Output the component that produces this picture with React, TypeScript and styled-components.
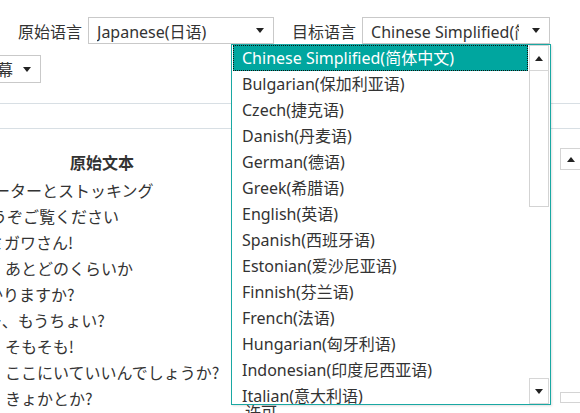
import styled, { createGlobalStyle } from "styled-components";

const GlobalStyle = createGlobalStyle`
  html, body {
    margin: 0;
    padding: 0;
    background: #ffffff;
    overflow: hidden;
  }
  body {
    font-family: "Noto Sans", "Noto Sans CJK SC", sans-serif;
    color: #333333;
  }
`;

const Viewport = styled.div`
  position: relative;
  width: 580px;
  height: 413px;
  overflow: hidden;
`;

// the page is scrolled sideways, so its left edge is out of view
const Page = styled.div`
  width: 640px;
  margin-left: -60px;
`;

const Toolbar = styled.div`
  display: flex;
  align-items: center;
  gap: 6px;
  padding: 17px 0 0 78px;
  height: 27px;
`;

const Label = styled.span<{ $gap?: number }>`
  font-size: 16px;
  font-family: "Noto Sans CJK SC", sans-serif;
  color: #333;
  margin-left: ${(p) => p.$gap ?? 0}px;
`;

const Select = styled.div<{ $width: number; $height?: number }>`
  box-sizing: border-box;
  width: ${(p) => p.$width}px;
  height: ${(p) => p.$height ?? 27}px;
  border: 1px solid #c9c9c9;
  background: #fff;
  display: flex;
  align-items: center;
  padding: 0 9px 0 8px;
  font-size: 16px;
  color: #333;
  white-space: nowrap;
  flex: none;
`;

const SelectText = styled.span<{ $right?: boolean }>`
  flex: 1;
  min-width: 0;
  overflow: hidden;
  text-align: ${(p) => (p.$right ? "right" : "left")};
  font-family: "Noto Sans", "Noto Sans CJK SC", sans-serif;
`;

const Caret = styled.span<{ $up?: boolean; $gap?: number }>`
  width: 0;
  height: 0;
  border-left: 4px solid transparent;
  border-right: 4px solid transparent;
  ${(p) =>
    p.$up
      ? "border-bottom: 5px solid #222;"
      : "border-top: 5px solid #222;"}
  flex: none;
  margin-left: ${(p) => p.$gap ?? 0}px;
`;

const SecondRow = styled.div`
  padding-top: 11px;
  height: 28px;
`;

const Rule = styled.div<{ $top: number }>`
  margin-top: ${(p) => p.$top}px;
  border-top: 1px solid #d8dfe4;
`;

const Main = styled.div`
  display: flex;
  height: 284px;
`;

const Pane = styled.div<{ $width?: number; $top: number }>`
  ${(p) => (p.$width ? `width: ${p.$width}px;` : "flex: 1;")}
  padding-top: ${(p) => p.$top}px;
  overflow: hidden;
`;

const PaneTitle = styled.div<{ $pad: number }>`
  padding-left: ${(p) => p.$pad}px;
  text-align: center;
  font-weight: 700;
  font-size: 16px;
  line-height: 26px;
  font-family: "Noto Sans CJK SC", sans-serif;
  color: #333;
  margin-bottom: 2px;
`;

const Line = styled.div<{ $pad: number }>`
  padding-left: ${(p) => p.$pad}px;
  font-size: 16px;
  line-height: 26px;
  white-space: nowrap;
  font-family: "Noto Sans CJK JP", sans-serif;
  color: #333;
`;

const SideBar = styled.div`
  width: 20px;
  display: flex;
  flex-direction: column;
  justify-content: space-between;
  padding: 19px 0 10px;
`;

const SideButton = styled.div<{ $height: number }>`
  box-sizing: border-box;
  height: ${(p) => p.$height}px;
  width: 22px;
  border: 1px solid #d4d4d4;
  display: flex;
  align-items: center;
  justify-content: center;
`;

const Dropdown = styled.div`
  position: absolute;
  left: 231px;
  top: 44px;
  width: 320px;
  height: 361px;
  box-sizing: border-box;
  border: 1px solid #19a8a3;
  background: #fff;
  display: flex;
  box-shadow: 1px 1px 2px rgba(0, 0, 0, 0.12);
`;

const List = styled.div`
  flex: 1;
  overflow: hidden;
`;

const Option = styled.div<{ $selected?: boolean }>`
  height: 26px;
  line-height: 24px;
  box-sizing: border-box;
  padding-left: 8px;
  font-size: 16px;
  white-space: nowrap;
  font-family: "Noto Sans", "Noto Sans CJK SC", sans-serif;
  color: ${(p) => (p.$selected ? "#fff" : "#333")};
  background: ${(p) => (p.$selected ? "#00a69f" : "transparent")};
  border: 1px ${(p) => (p.$selected ? "dotted #111" : "solid transparent")};
  margin: 0 1px;
`;

const Scrollbar = styled.div`
  width: 20px;
  margin-right: 1px;
  display: flex;
  flex-direction: column;
`;

const ScrollButton = styled.div`
  box-sizing: border-box;
  height: 26px;
  border: 1px solid #d6d6d6;
  display: flex;
  align-items: center;
  justify-content: center;
  background: #fff;
`;

const Track = styled.div`
  flex: 1;
  display: flex;
  flex-direction: column;
`;

const Thumb = styled.div`
  box-sizing: border-box;
  height: 136px;
  border: 1px solid #d3d3d3;
  border-top: none;
  background: #fff;
`;

const languages = [
  "Chinese Simplified(简体中文)",
  "Bulgarian(保加利亚语)",
  "Czech(捷克语)",
  "Danish(丹麦语)",
  "German(德语)",
  "Greek(希腊语)",
  "English(英语)",
  "Spanish(西班牙语)",
  "Estonian(爱沙尼亚语)",
  "Finnish(芬兰语)",
  "French(法语)",
  "Hungarian(匈牙利语)",
  "Indonesian(印度尼西亚语)",
  "Italian(意大利语)",
];

// x is where the line starts, in view pixels (the page is scrolled by 60)
const sourceLines = [
  { text: "ガーターとストッキング", x: -22 },
  { text: "どうぞご覧ください", x: -25 },
  { text: "ミガワさん!", x: -12 },
  { text: "あとどのくらいか", x: 5 },
  { text: "かかりますか?", x: -29 },
  { text: "ねー、もうちょい?", x: -30 },
  { text: "そもそも!", x: 5 },
  { text: "ここにいていいんでしょうか?", x: 5 },
  { text: "きょかとか?", x: 5 },
];

const targetLines = [
  "吊带袜和丝袜",
  "请您观看",
  "三川先生!",
  "还要多久",
  "需要吗?",
  "再等一下?",
  "说到底!",
  "我可以待在这里吗?",
  "许可",
];

export default function App() {
  return (
    <Viewport>
      <GlobalStyle />
      <Page>
        <Toolbar>
          <Label>原始语言</Label>
          <Select $width={186}>
            <SelectText>Japanese(日语)</SelectText>
            <Caret $gap={8} />
          </Select>
          <Label $gap={12}>目标语言</Label>
          <Select $width={188}>
            <SelectText>Chinese Simplified(简体中文)</SelectText>
            <Caret $gap={13} />
          </Select>
        </Toolbar>
        <SecondRow>
          <Select $width={101} $height={28}>
            <SelectText $right>双语字幕</SelectText>
            <Caret $gap={10} />
          </Select>
        </SecondRow>
        <Rule $top={20} />
        <Rule $top={24} />
        <Main>
          <Pane $width={292} $top={20}>
            <PaneTitle $pad={32}>原始文本</PaneTitle>
            {sourceLines.map((l) => (
              <Line key={l.text} $pad={60 + l.x}>
                {l.text}
              </Line>
            ))}
          </Pane>
          <Pane $top={33}>
            <PaneTitle $pad={0}>翻译文本</PaneTitle>
            {targetLines.map((l) => (
              <Line key={l} $pad={13}>
                {l}
              </Line>
            ))}
          </Pane>
          <SideBar>
            <SideButton $height={22}>
              <Caret $up />
            </SideButton>
            <SideButton $height={11} />
          </SideBar>
        </Main>
      </Page>
      <Dropdown>
        <List>
          {languages.map((l, i) => (
            <Option key={l} $selected={i === 0}>
              {l}
            </Option>
          ))}
        </List>
        <Scrollbar>
          <ScrollButton>
            <Caret $up />
          </ScrollButton>
          <Track>
            <Thumb />
          </Track>
          <ScrollButton>
            <Caret />
          </ScrollButton>
        </Scrollbar>
      </Dropdown>
    </Viewport>
  );
}
